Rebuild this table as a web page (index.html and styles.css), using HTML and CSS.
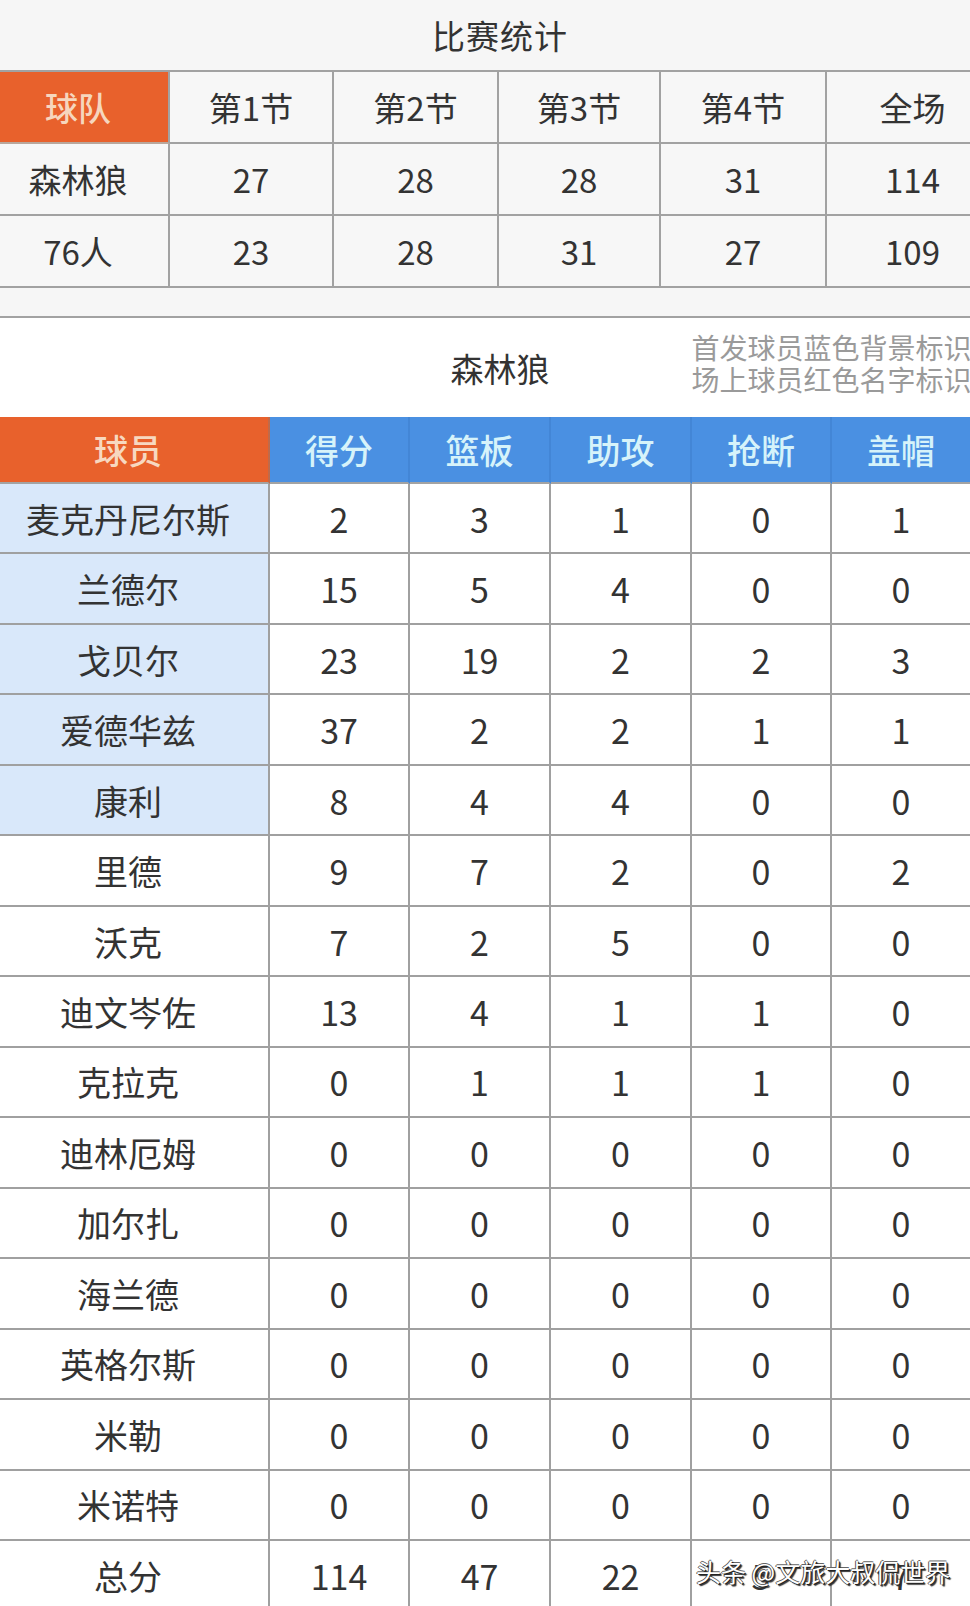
FILE: index.html
```html
<!DOCTYPE html>
<html lang="zh-CN">
<head>
<meta charset="utf-8">
<title>比赛统计</title>
<link rel="stylesheet" href="styles.css">
</head>
<body>
<div class="page">
  <div class="title">比赛统计</div>
  <div class="score-grid">
    <div class="cell head-orange">球队</div>
    <div class="cell">第1节</div>
    <div class="cell">第2节</div>
    <div class="cell">第3节</div>
    <div class="cell">第4节</div>
    <div class="cell">全场</div>

    <div class="cell">森林狼</div>
    <div class="cell">27</div>
    <div class="cell">28</div>
    <div class="cell">28</div>
    <div class="cell">31</div>
    <div class="cell">114</div>

    <div class="cell">76人</div>
    <div class="cell">23</div>
    <div class="cell">28</div>
    <div class="cell">31</div>
    <div class="cell">27</div>
    <div class="cell">109</div>
  </div>
  <div class="gap"></div>
  <div class="team-section">
    <div class="team-head">
      <div class="team-name">森林狼</div>
      <div class="note">
        <div class="note-line">首发球员蓝色背景标识</div>
        <div class="note-line">场上球员红色名字标识</div>
      </div>
    </div>
    <div class="player-grid">
      <div class="pc ph-orange">球员</div>
      <div class="pc ph-blue">得分</div>
      <div class="pc ph-blue">篮板</div>
      <div class="pc ph-blue">助攻</div>
      <div class="pc ph-blue">抢断</div>
      <div class="pc ph-blue">盖帽</div>

      <div class="pc name starter">麦克丹尼尔斯</div><div class="pc">2</div><div class="pc">3</div><div class="pc">1</div><div class="pc">0</div><div class="pc">1</div>
      <div class="pc name starter">兰德尔</div><div class="pc">15</div><div class="pc">5</div><div class="pc">4</div><div class="pc">0</div><div class="pc">0</div>
      <div class="pc name starter">戈贝尔</div><div class="pc">23</div><div class="pc">19</div><div class="pc">2</div><div class="pc">2</div><div class="pc">3</div>
      <div class="pc name starter">爱德华兹</div><div class="pc">37</div><div class="pc">2</div><div class="pc">2</div><div class="pc">1</div><div class="pc">1</div>
      <div class="pc name starter">康利</div><div class="pc">8</div><div class="pc">4</div><div class="pc">4</div><div class="pc">0</div><div class="pc">0</div>
      <div class="pc name">里德</div><div class="pc">9</div><div class="pc">7</div><div class="pc">2</div><div class="pc">0</div><div class="pc">2</div>
      <div class="pc name">沃克</div><div class="pc">7</div><div class="pc">2</div><div class="pc">5</div><div class="pc">0</div><div class="pc">0</div>
      <div class="pc name">迪文岑佐</div><div class="pc">13</div><div class="pc">4</div><div class="pc">1</div><div class="pc">1</div><div class="pc">0</div>
      <div class="pc name">克拉克</div><div class="pc">0</div><div class="pc">1</div><div class="pc">1</div><div class="pc">1</div><div class="pc">0</div>
      <div class="pc name">迪林厄姆</div><div class="pc">0</div><div class="pc">0</div><div class="pc">0</div><div class="pc">0</div><div class="pc">0</div>
      <div class="pc name">加尔扎</div><div class="pc">0</div><div class="pc">0</div><div class="pc">0</div><div class="pc">0</div><div class="pc">0</div>
      <div class="pc name">海兰德</div><div class="pc">0</div><div class="pc">0</div><div class="pc">0</div><div class="pc">0</div><div class="pc">0</div>
      <div class="pc name">英格尔斯</div><div class="pc">0</div><div class="pc">0</div><div class="pc">0</div><div class="pc">0</div><div class="pc">0</div>
      <div class="pc name">米勒</div><div class="pc">0</div><div class="pc">0</div><div class="pc">0</div><div class="pc">0</div><div class="pc">0</div>
      <div class="pc name">米诺特</div><div class="pc">0</div><div class="pc">0</div><div class="pc">0</div><div class="pc">0</div><div class="pc">0</div>
      <div class="pc name">总分</div><div class="pc">114</div><div class="pc">47</div><div class="pc">22</div><div class="pc">5</div><div class="pc">7</div>
    </div>
  </div>
  <div class="watermark">头条 @文旅大叔侃世界</div>
</div>
</body>
</html>
```
FILE: styles.css
```css
html, body {
  margin: 0;
  padding: 0;
  overflow: hidden;
  background: #f6f6f6;
}

.page {
  position: relative;
  width: 1000px;
  font-family: "Noto Sans CJK SC", "Noto Sans", sans-serif;
  color: #333333;
  background: #f6f6f6;
}

.title {
  height: 70px;
  display: flex;
  align-items: center;
  justify-content: center;
  font-size: 33px;
  letter-spacing: 1px;
}

.score-grid {
  display: grid;
  margin-left: -12px;
  grid-template-columns: 182px 164px 165px 162px 166px 173px;
  grid-auto-rows: 72px;
  border-top: 2px solid #a2a2a2;
}

.score-grid .cell {
  box-sizing: border-box;
  display: flex;
  align-items: center;
  justify-content: center;
  border-right: 2px solid #a2a2a2;
  border-bottom: 2px solid #a2a2a2;
  font-size: 33px;
  background: #f7f7f7;
}

.score-grid .head-orange {
  background: #e8612c;
  color: #f6d6bd;
  font-weight: 500;
  border-bottom-color: #b9a79c;
}

.gap {
  height: 28px;
}

.team-section {
  border-top: 2px solid #a2a2a2;
  background: #ffffff;
}

.team-head {
  height: 99px;
  display: grid;
  grid-template-columns: 1fr auto 1fr;
  align-items: center;
}

.team-name {
  grid-column: 2;
  font-size: 33px;
}

.note {
  grid-column: 3;
  padding-left: 142px;
  padding-bottom: 10px;
  font-size: 28px;
  color: #9a9a9a;
  white-space: nowrap;
}

.note-line {
  height: 32px;
  line-height: 32px;
}

.player-grid {
  display: grid;
  margin-left: -12px;
  width: 984px;
  grid-template-columns: 282px 140px 141px 141px 140px 140px;
  grid-template-rows: 67px;
  grid-auto-rows: 70.47px;
}

.pc {
  box-sizing: border-box;
  display: flex;
  align-items: center;
  justify-content: center;
  border-right: 2px solid #a0a0a0;
  border-bottom: 2px solid #a0a0a0;
  font-size: 34px;
  background: #ffffff;
}

.pc.ph-orange {
  background: #e8612c;
  color: #f7d8c0;
  font-weight: 500;
  border-right-color: #c06a4a;
  border-bottom-color: #a3a3a3;
}

.pc.ph-blue {
  background: #4a90e2;
  color: #d6f3fa;
  font-weight: 500;
  border-right-color: #4386d6;
  border-bottom-color: #a3a3a3;
}

.pc.starter {
  background: #d9e8fa;
}

.watermark {
  position: absolute;
  left: 696px;
  top: 1555px;
  font-size: 25px;
  line-height: 32px;
  color: #ffffff;
  white-space: nowrap;
  text-shadow: 1px 1px 0 #222, 2px 2px 1px #333, -1px 0 0 #555, 0 -1px 0 #666;
}
```
